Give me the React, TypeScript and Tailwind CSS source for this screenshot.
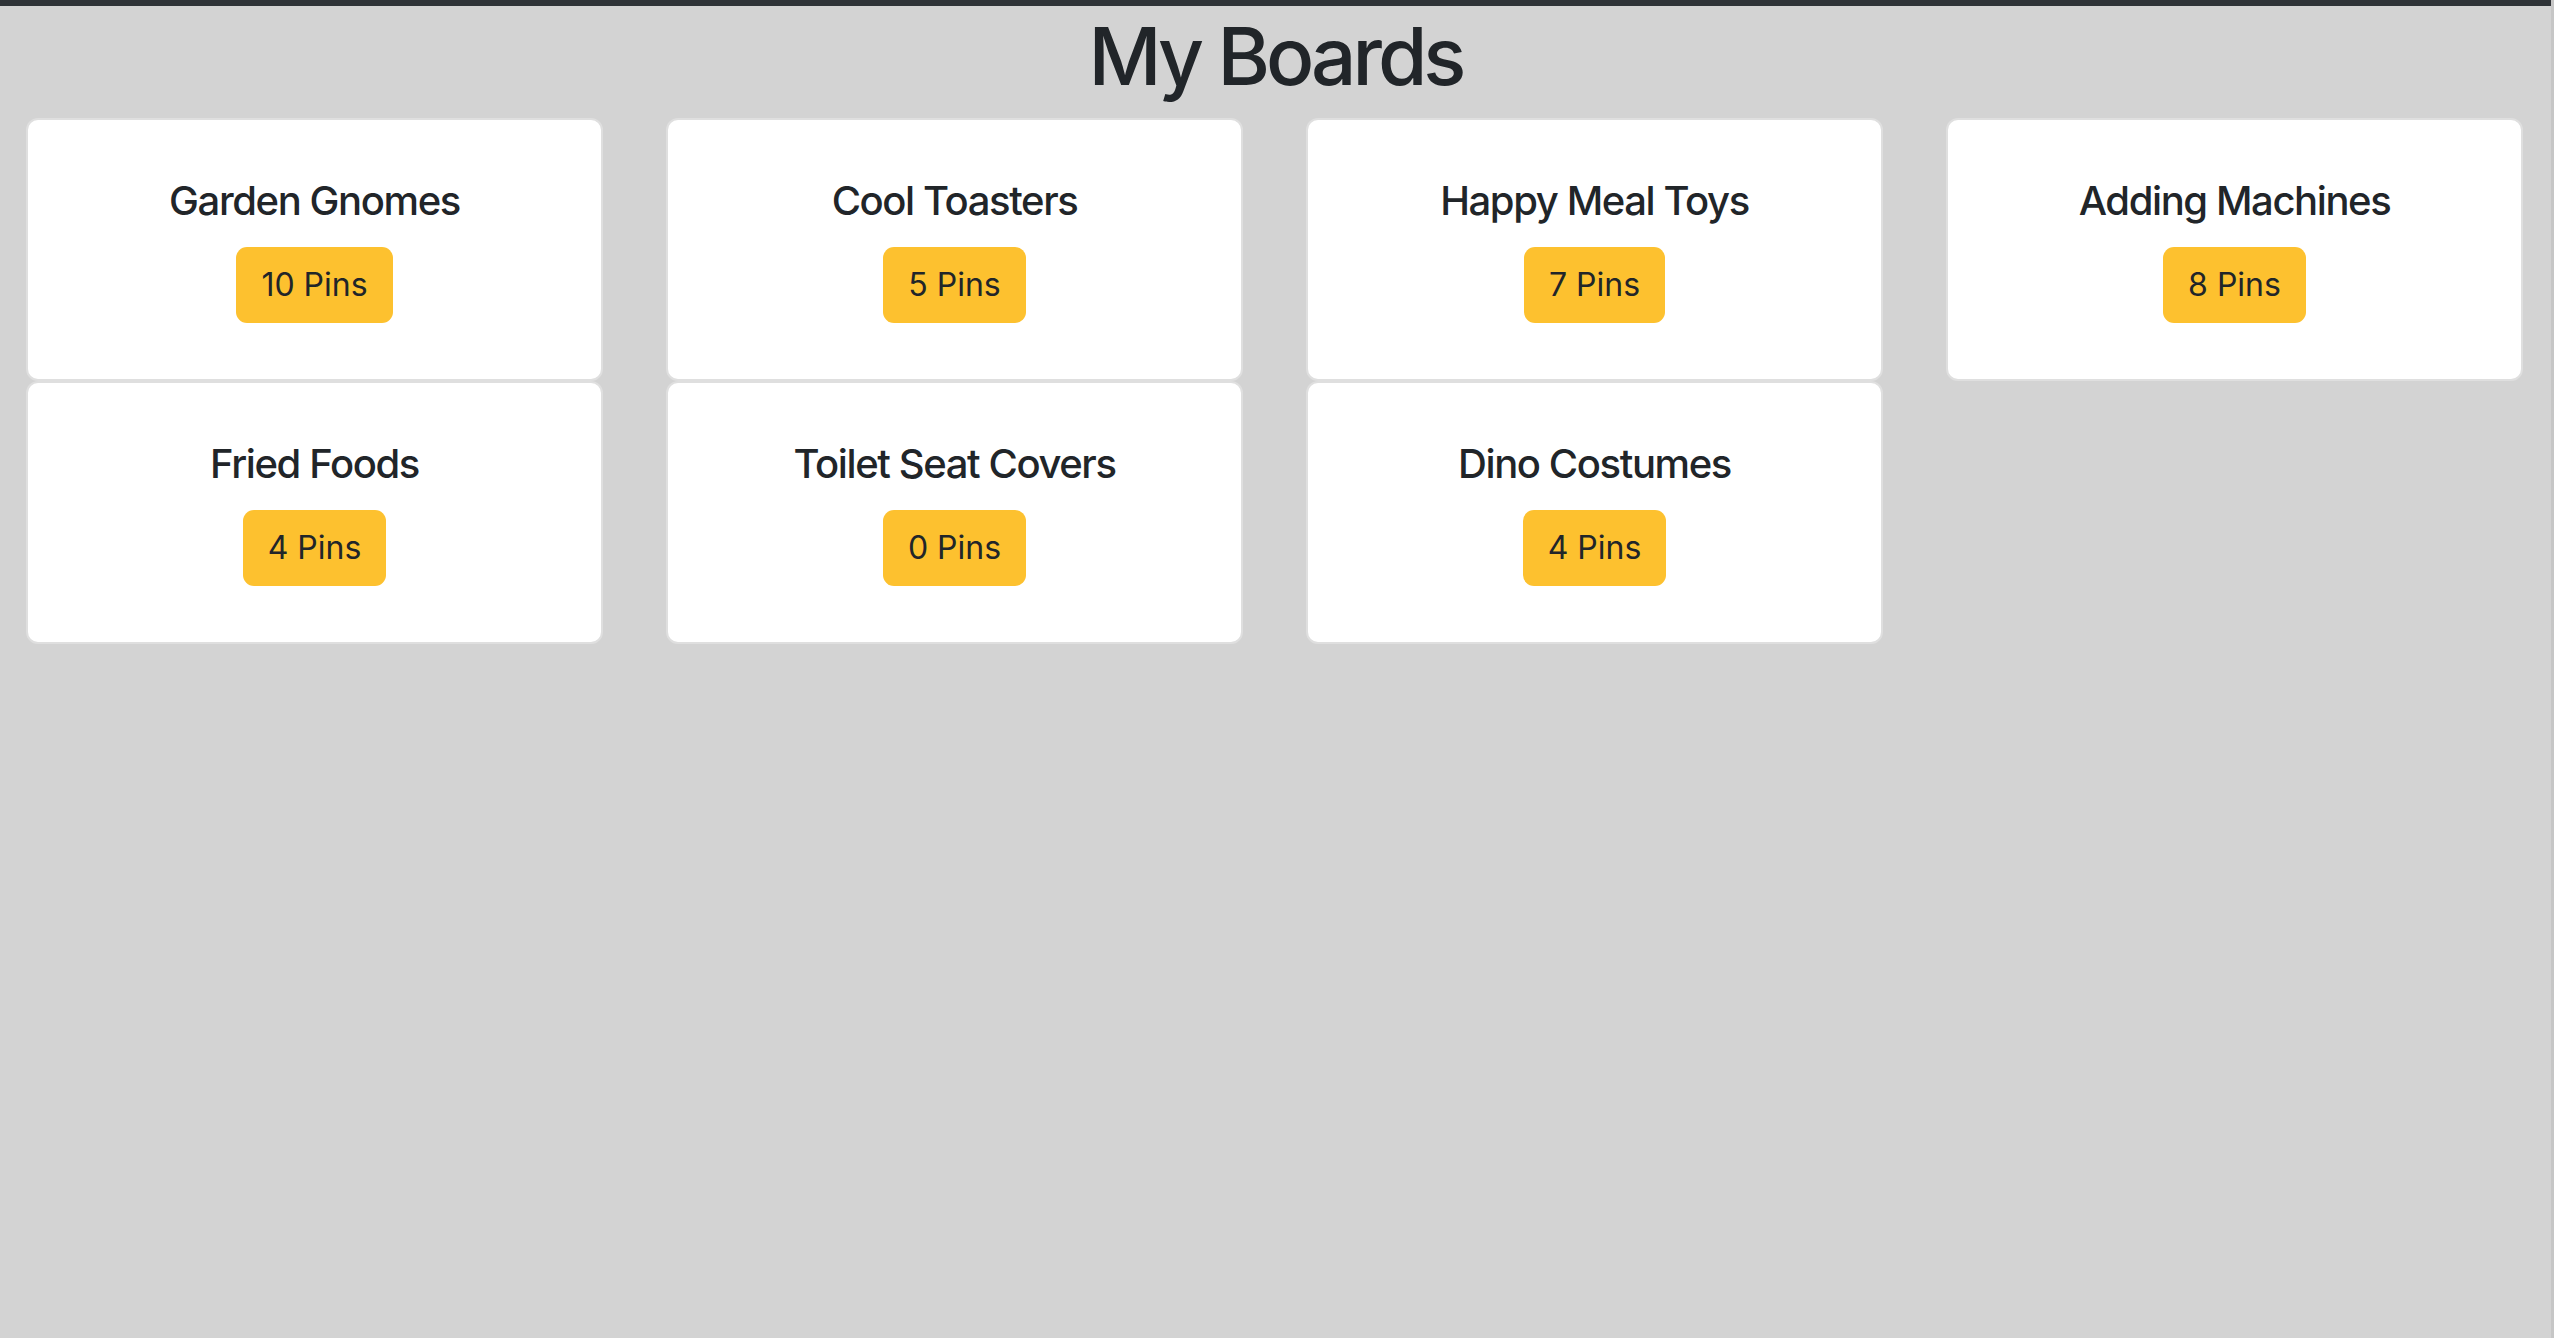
const boards = [
  { name: 'Garden Gnomes', pins: 10 },
  { name: 'Cool Toasters', pins: 5 },
  { name: 'Happy Meal Toys', pins: 7 },
  { name: 'Adding Machines', pins: 8 },
  { name: 'Fried Foods', pins: 4 },
  { name: 'Toilet Seat Covers', pins: 0 },
  { name: 'Dino Costumes', pins: 4 },
];

function BoardCard({ name, pins }: { name: string; pins: number }) {
  return (
    <div className="h-[263px] bg-white border-2 border-[#dfdfdf] rounded-[12px] flex flex-col items-center justify-center gap-[22px]">
      <h5 className="text-[40px] leading-[48px] font-medium tracking-[-0.035em] text-[#212529]">{name}</h5>
      <button className="h-[76px] px-[25px] rounded-[11px] bg-[#fdc12f] text-[32px] leading-[48px] text-[#212529]">
        {pins} Pins
      </button>
    </div>
  );
}

export default function App() {
  return (
    <div
      className="min-h-screen bg-[#d3d3d3] border-r-[3px] border-[#c6c6c6]"
      style={{ fontFamily: 'Inter, "Noto Sans", "Liberation Sans", sans-serif' }}
    >
      <div className="h-[6px] bg-[#2f3337]" />
      <h1 className="mt-[2px] mb-[14px] text-center text-[80px] leading-[96px] font-medium tracking-[-0.05em] text-[#212529]">
        My Boards
      </h1>
      <div className="grid grid-cols-[repeat(4,577px)] gap-x-[63px] pl-[26px]">
        {boards.map((b) => (
          <BoardCard key={b.name} name={b.name} pins={b.pins} />
        ))}
      </div>
    </div>
  );
}
